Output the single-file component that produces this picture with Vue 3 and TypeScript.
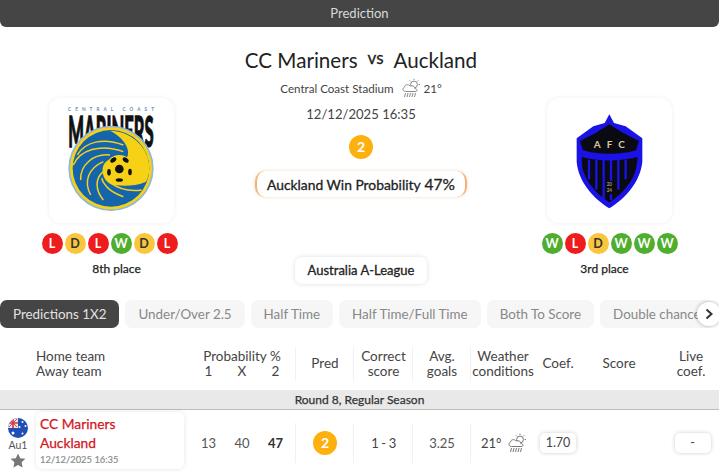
<script setup lang="ts">
type Res = 'W' | 'D' | 'L'
const homeForm: Res[] = ['L', 'D', 'L', 'W', 'D', 'L']
const awayForm: Res[] = ['W', 'L', 'D', 'W', 'W', 'W']
const tabs: string[] = ['Predictions 1X2', 'Under/Over 2.5', 'Half Time', 'Half Time/Full Time', 'Both To Score', 'Double chance']
const stripes: number[] = [72, 94, 116, 138, 160, 182]
const swirlLines: string[] = [
  'M52 165 C75 125 130 112 190 135',
  'M40 195 C60 150 120 130 190 155',
  'M62 240 C60 195 100 160 150 165',
  'M92 285 C70 245 85 205 130 185',
  'M130 300 C105 270 105 235 130 215',
  'M190 290 C160 280 135 265 125 235',
  'M245 270 C210 275 175 266 150 248',
]
</script>

<template>
  <div class="page">
    <header class="topbar">Prediction</header>

    <section class="match">
      <div class="team">
        <div class="logo">
          <svg viewBox="-33 -6 375 375" width="125" height="125">
            <text x="153" y="32" text-anchor="middle" class="central" textLength="258">CENTRAL COAST</text>
            <text x="153" y="0" text-anchor="middle" class="mariners" textLength="256" lengthAdjust="spacingAndGlyphs" transform="translate(0 140) scale(1 2.5)">MARINERS</text>
            <circle cx="153" cy="205" r="128" fill="#8fb8d8" />
            <circle cx="153" cy="205" r="123" fill="#f6d116" />
            <circle cx="153" cy="205" r="115" fill="#1565ad" />
            <path d="M150 92 C205 92 268 135 268 205 C268 222 264 235 258 245 C230 258 195 258 170 256 C140 255 125 230 128 205 C132 178 165 168 195 178 C215 165 205 120 150 92 Z" fill="#f6d116" />
            <path v-for="(d, i) in swirlLines" :key="i" :d="d" fill="none" stroke="#f6d116" stroke-width="4.5" />
            <circle cx="178" cy="207" r="42" fill="#f6d116" />
            <circle cx="178" cy="207" r="13" fill="#111" />
            <ellipse cx="160" cy="180" rx="10" ry="6.5" fill="#111" transform="rotate(-35 160 180)" />
            <ellipse cx="197" cy="180" rx="10" ry="6.5" fill="#111" transform="rotate(35 197 180)" />
            <ellipse cx="147" cy="217" rx="5.5" ry="10" fill="#111" />
            <ellipse cx="210" cy="216" rx="5.5" ry="10" fill="#111" />
            <ellipse cx="178" cy="240" rx="11" ry="5.5" fill="#111" />
          </svg>
        </div>
        <div class="form home">
          <span v-for="(r, i) in homeForm" :key="i" class="dot" :class="r">{{ r }}</span>
        </div>
        <div class="place left">8th place</div>
      </div>

      <div class="center">
        <h1 class="title"><span>CC Mariners</span><small>vs</small><span>Auckland</span></h1>
        <div class="stadium">
          Central Coast Stadium
          <svg class="wx" viewBox="0 0 20 20" width="20" height="20">
            <g fill="none" stroke="#888" stroke-width="1">
              <circle cx="13" cy="6.5" r="3.4" />
              <path d="M13 0.8V2M17.2 2.4L16.2 3.4M19 6.5H17.6M8.8 2.4L9.8 3.4" />
              <path d="M4.5 13.5C1.8 13.5 1 10.3 3.4 9.2C3.6 6.6 7.4 5.6 9 8C11.8 7 14.2 8.6 13.8 10.6C16.4 10.6 16.8 13.5 14.6 13.5Z" fill="#fff" />
              <path d="M4.5 15L3.5 19M7 15L6 19M9.5 15L8.5 19M12 15L11 19M14.5 15L13.5 19" />
            </g>
          </svg>
          <span>21°</span>
        </div>
        <div class="date">12/12/2025 16:35</div>
        <div class="pick big">2</div>
        <div class="prob">Auckland Win Probability <b>47%</b></div>
        <div class="league">Australia A-League</div>
      </div>

      <div class="team">
        <div class="logo">
          <svg viewBox="-54 -21 375 375" width="125" height="125">
            <path d="M133 28 L147 54 L182 64 L232 100 L232 170 C226 230 182 280 133 310 C85 280 40 230 35 170 L35 100 L85 64 L119 54 Z" fill="#1b12e6" />
            <path d="M133 58 L175 84 L222 108 L213 136 C170 150 96 150 54 136 L45 108 L92 84 Z" fill="#0a0a12" />
            <path d="M50 156 C100 170 166 170 218 156 L214 188 C204 232 170 268 133 292 C97 268 62 232 52 188 Z" fill="#0a0a12" />
            <g stroke="#1b12e6" stroke-width="7">
              <path v-for="x in stripes" :key="x" :d="`M${x} 164 V${300 - Math.abs(x - 127) * 1.4}`" />
            </g>
            <rect x="120" y="228" width="26" height="40" fill="#0a0a12" />
            <text x="142" y="128" text-anchor="middle" class="afc">AFC</text>
            <text x="133" y="244" text-anchor="middle" class="yr">20</text>
            <text x="133" y="262" text-anchor="middle" class="yr">24</text>
          </svg>
        </div>
        <div class="form">
          <span v-for="(r, i) in awayForm" :key="i" class="dot" :class="r">{{ r }}</span>
        </div>
        <div class="place right">3rd place</div>
      </div>
    </section>

    <nav class="tabs">
      <span v-for="(t, i) in tabs" :key="t" class="tab" :class="{ active: i === 0 }">{{ t }}</span>
      <span class="arrow">
        <svg viewBox="0 0 10 12" width="10" height="12"><path d="M2.5 1.5L7.5 6L2.5 10.5" fill="none" stroke="#333" stroke-width="2" /></svg>
      </span>
    </nav>

    <div class="grid head">
      <div class="c-team">Home team<br />Away team</div>
      <div class="c-prob">
        <div>Probability %</div>
        <div class="triple"><span>1</span><span>X</span><span>2</span></div>
      </div>
      <div class="c ruled">Pred</div>
      <div class="c ruled">Correct<br />score</div>
      <div class="c ruled">Avg.<br />goals</div>
      <div class="c ruled">Weather<br />conditions</div>
      <div class="c">Coef.</div>
      <div class="c">Score</div>
      <div class="c live">Live<br />coef.</div>
    </div>

    <div class="round">Round 8, Regular Season</div>

    <div class="grid row">
      <div class="c-lead">
        <div class="side">
          <svg viewBox="0 0 20 20" width="20" height="20">
            <defs><clipPath id="fc"><circle cx="10" cy="10" r="10" /></clipPath></defs>
            <g clip-path="url(#fc)">
              <rect width="20" height="20" fill="#1f4fb4" />
              <rect width="10" height="10" fill="#e9e3ea" />
              <path d="M0 4.2H10V5.8H0ZM4.2 0H5.8V10H4.2Z" fill="#d8343c" />
              <path d="M1 1L9 9M9 1L1 9" stroke="#d8343c" stroke-width="0.9" />
              <g fill="#fff">
                <circle cx="5" cy="15" r="1.5" /><circle cx="14.5" cy="4" r="1" /><circle cx="14.5" cy="15.5" r="1" />
                <circle cx="11.5" cy="9" r="1" /><circle cx="17.5" cy="8" r="1" />
              </g>
            </g>
          </svg>
          <span class="code">Au1</span>
          <svg viewBox="0 0 16 15" width="16" height="15"><path d="M8 0.5L10.2 5.2L15.4 5.8L11.6 9.3L12.6 14.4L8 11.9L3.4 14.4L4.4 9.3L0.6 5.8L5.8 5.2Z" fill="#777" /></svg>
        </div>
        <div class="card">
          <div class="tn">CC Mariners</div>
          <div class="tn">Auckland</div>
          <div class="cdate">12/12/2025 16:35</div>
        </div>
      </div>
      <div class="c-prob triple vals"><span>13</span><span>40</span><span><b>47</b></span></div>
      <div class="c ruled"><span class="pick">2</span></div>
      <div class="c ruled strong tight">1 - 3</div>
      <div class="c ruled">3.25</div>
      <div class="c ruled wxcell">
        <span class="strong">21°</span>
        <svg viewBox="0 0 20 20" width="20" height="20">
          <g fill="none" stroke="#777" stroke-width="1">
            <circle cx="13" cy="6.5" r="3.4" />
            <path d="M13 0.8V2M17.2 2.4L16.2 3.4M19 6.5H17.6M8.8 2.4L9.8 3.4" />
            <path d="M4.5 13.5C1.8 13.5 1 10.3 3.4 9.2C3.6 6.6 7.4 5.6 9 8C11.8 7 14.2 8.6 13.8 10.6C16.4 10.6 16.8 13.5 14.6 13.5Z" fill="#fff" />
            <path d="M4.5 15L3.5 19M7 15L6 19M9.5 15L8.5 19M12 15L11 19M14.5 15L13.5 19" />
          </g>
        </svg>
      </div>
      <div class="c"><span class="chip">1.70</span></div>
      <div class="c"></div>
      <div class="c live"><span class="chip shifted">-</span></div>
    </div>
  </div>
</template>

<style scoped>
.page {
  width: 719px;
  height: 474px;
  overflow: hidden;
  background: #fff;
  font-family: Lato, "Open Sans", sans-serif;
  color: #333;
}
.topbar {
  height: 27px;
  background: #454545;
  border-radius: 0 0 6px 6px;
  color: #d9d9d9;
  font-size: 13px;
  line-height: 27px;
  text-align: center;
}
.match {
  display: grid;
  grid-template-columns: 222px 278px 219px;
  height: 273px;
}
.team {
  display: flex;
  flex-direction: column;
  align-items: center;
  padding-top: 71px;
}
.logo {
  width: 125px;
  height: 125px;
  border-radius: 12px;
  background: #fff;
  box-shadow: 0 0 5px rgba(0, 0, 0, 0.07);
}
.logo svg {
  display: block;
}
.central {
  font-size: 14px;
  font-weight: 700;
  fill: #5b8fc0;
}
.mariners {
  font-size: 50px;
  font-weight: 900;
  fill: #111;
  stroke: #111;
  stroke-width: 1.5px;
}
.afc {
  font-size: 30px;
  font-weight: 700;
  fill: #d8c89a;
  letter-spacing: 18px;
}
.yr {
  font-size: 14px;
  font-weight: 700;
  fill: #a5966f;
}
.form {
  display: flex;
  gap: 2px;
  margin-top: 10px;
}
.form.home {
  margin-right: 3px;
}
.dot {
  width: 21px;
  height: 21px;
  border-radius: 50%;
  font-size: 12.5px;
  font-weight: 700;
  line-height: 21px;
  text-align: center;
}
.dot.L {
  background: #ee1c1c;
  color: #fff;
}
.dot.D {
  background: #f9c63d;
  color: #333;
}
.dot.W {
  background: #4fae2e;
  color: #fff;
}
.place {
  margin-top: 8px;
  font-size: 12px;
  line-height: 14px;
  color: #222;
  -webkit-text-stroke: 0.25px #222;
}
.place.left {
  margin-left: 11px;
}
.place.right {
  margin-right: 10px;
}
.center {
  display: flex;
  flex-direction: column;
  align-items: center;
  padding-top: 18px;
}
.title {
  display: flex;
  align-items: center;
  gap: 10px;
  margin: 0;
  font-size: 20.6px;
  font-weight: 400;
  line-height: 30px;
  color: #222;
}
.title small {
  font-size: 17px;
  margin-top: -4px;
  -webkit-text-stroke: 0.3px #222;
}
.stadium {
  display: flex;
  align-items: center;
  gap: 2px;
  height: 20px;
  margin-top: 3px;
  font-size: 11.6px;
  color: #444;
}
.wx {
  margin-left: 6px;
}
.date {
  margin-top: 8px;
  font-size: 13.1px;
  line-height: 17px;
  color: #444;
}
.pick {
  display: inline-block;
  width: 24px;
  height: 24px;
  border-radius: 50%;
  background: #fdb10e;
  color: #fff;
  font-size: 14px;
  font-weight: 700;
  line-height: 24px;
  text-align: center;
}
.pick.big {
  margin-top: 12px;
}
.prob {
  display: flex;
  align-items: center;
  justify-content: center;
  gap: 4px;
  width: 212px;
  height: 26px;
  margin-top: 12px;
  box-sizing: border-box;
  border-radius: 10px;
  border-left: 2px solid #f4b27a;
  border-right: 2px solid #f4b27a;
  box-shadow: 0 0 3px rgba(240, 170, 110, 0.5);
  font-size: 13.85px;
  color: #222;
  -webkit-text-stroke: 0.3px #222;
}
.prob b {
  font-size: 15.5px;
  font-weight: 400;
}
.league {
  width: 132px;
  height: 27px;
  margin-top: 60px;
  border-radius: 7px;
  box-shadow: 0 0 5px rgba(0, 0, 0, 0.13);
  font-size: 13px;
  line-height: 27px;
  text-align: center;
  color: #222;
  -webkit-text-stroke: 0.3px #222;
}
.tabs {
  position: relative;
  display: flex;
  gap: 6px;
  height: 28px;
  overflow: hidden;
}
.tab {
  flex: none;
  padding: 0 13px;
  border-radius: 7px;
  background: #f6f6f6;
  color: #888;
  font-size: 13.4px;
  line-height: 28px;
}
.tab.active {
  background: #454545;
  color: #e2e2e2;
}
.arrow {
  position: absolute;
  right: -2px;
  top: 2px;
  display: flex;
  align-items: center;
  justify-content: center;
  width: 24px;
  height: 24px;
  border-radius: 50%;
  background: #fff;
  box-shadow: 0 0 4px rgba(0, 0, 0, 0.3);
}
.grid {
  display: grid;
  grid-template-columns: 192px 104px 58px 59px 58px 64px 46px 76px 62px;
}
.head {
  box-sizing: border-box;
  height: 62px;
  padding-top: 10px;
  align-items: center;
  font-size: 13.5px;
  line-height: 15.5px;
  color: #444;
}
.c-team {
  padding-left: 36px;
}
.c-prob {
  text-align: center;
  width: 100px;
}
.triple {
  display: grid;
  grid-template-columns: repeat(3, 33.5px);
  justify-content: center;
}
.c {
  display: flex;
  align-items: center;
  justify-content: center;
  height: 100%;
  text-align: center;
}
.ruled {
  box-shadow: -1px 0 0 #f1f1f1;
}
.head .c {
  height: 34px;
}
.live {
  padding-left: 6px;
}
.round {
  height: 19px;
  background: #e9e9e9;
  border-bottom: 1px solid #bdbdbd;
  font-size: 12px;
  line-height: 19px;
  text-align: center;
  color: #333;
  -webkit-text-stroke: 0.25px #333;
}
.row {
  height: 64px;
  align-items: center;
  font-size: 13px;
  color: #555;
}
.row .c {
  height: 40px;
  margin-top: 2px;
}
.vals {
  margin-top: 2px;
}
.c-lead {
  display: flex;
  align-items: flex-start;
  height: 64px;
}
.side {
  display: flex;
  flex-direction: column;
  align-items: center;
  width: 36px;
  padding-top: 8px;
}
.code {
  font-size: 10.5px;
  line-height: 14px;
  margin: 0 0 1px;
  color: #555;
}
.card {
  width: 148px;
  height: 57px;
  margin-top: 2px;
  box-sizing: border-box;
  padding: 2px 0 0 4px;
  border-radius: 6px;
  box-shadow: 0 0 5px rgba(0, 0, 0, 0.1);
}
.tn {
  color: #d5141c;
  font-size: 13.8px;
  line-height: 19px;
  -webkit-text-stroke: 0.25px #d5141c;
}
.cdate {
  color: #8a8a8a;
  font-size: 9.4px;
  line-height: 13px;
  margin-top: 1px;
  -webkit-text-stroke: 0.15px #8a8a8a;
}
.vals b {
  font-weight: 700;
  color: #333;
}
.strong {
  color: #444;
}
.tight {
  letter-spacing: -0.4px;
}
.wxcell {
  gap: 6px;
  justify-content: flex-start;
  padding-left: 10px;
}
.chip {
  display: inline-block;
  width: 36px;
  height: 20px;
  border-radius: 5px;
  box-shadow: 0 0 4px rgba(0, 0, 0, 0.2);
  font-size: 12.5px;
  line-height: 20px;
  text-align: center;
  color: #444;
}
.chip.shifted {
  margin-left: 3px;
}
</style>
